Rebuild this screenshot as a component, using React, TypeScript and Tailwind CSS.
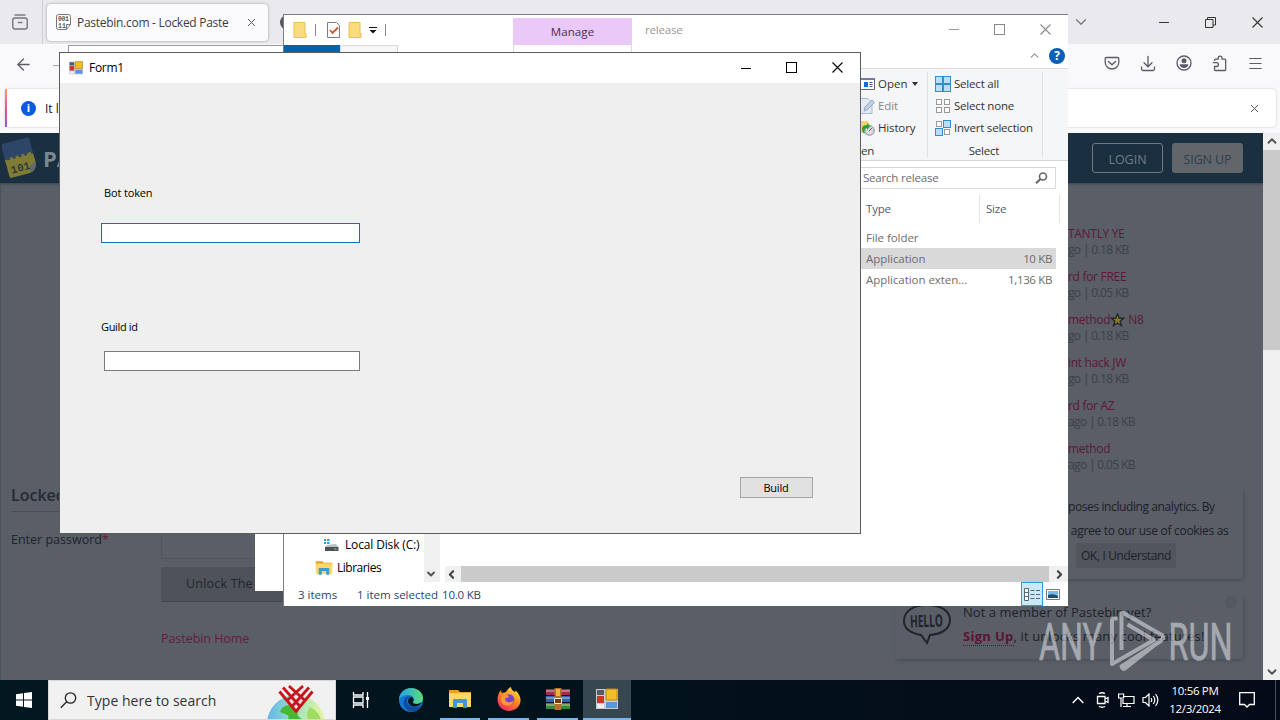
import { ArrowLeft, ChevronDown, ChevronUp, Menu, Search, X } from "lucide-react";

const recentPastes = [
  { title: "TANTLY YE", meta: "go | 0.18 KB" },
  { title: "rd for FREE", meta: "go | 0.05 KB" },
  { title: "method", star: true, suffix: "N8", meta: "go | 0.18 KB" },
  { title: "int hack JW", meta: "go | 0.18 KB" },
  { title: "rd for AZ", meta: "ago | 0.18 KB" },
  { title: "method", meta: "ago | 0.05 KB" },
];

const files = [
  { type: "File folder", size: "", selected: false },
  { type: "Application", size: "10 KB", selected: true },
  { type: "Application exten...", size: "1,136 KB", selected: false },
];

const App = () => {
  return (
    <div className="relative h-[720px] w-[1280px] overflow-hidden bg-black font-['Open_Sans',sans-serif] text-[12px] leading-4 whitespace-nowrap">
      <Browser />
      {/* window behind the explorer */}
      <div className="absolute top-[500px] left-[255px] h-[91px] w-[40px] bg-white" />
      <Explorer />
      <FormWindow />
      <Watermark />
      <Taskbar />
    </div>
  );
};

// ===============================
// BROWSER
// ===============================
function Browser() {
  return (
    <div className="flex h-[680px] flex-col">
      {/* TAB BAR */}
      <div className="flex h-[44px] shrink-0 items-center bg-[#eaeaee]">
        <div className="flex h-full w-[43px] items-center border-r border-[#cfcfd6] pl-[12px]">
          <svg width="16" height="16" viewBox="0 0 16 16" fill="none" stroke="#74747c" strokeWidth="1.4">
            <path d="M2.5 1h11" />
            <rect x=".8" y="4" width="14.4" height="11" rx="2" />
            <path d="M5.8 8.5h4.6" />
          </svg>
        </div>
        <div className="ml-[4px] flex h-[37px] w-[221px] items-center rounded bg-[#fbfbfd] pl-[9px] shadow-[0_0_3px_#9999a4]">
          <svg width="15" height="16" viewBox="0 0 15 16">
            <path d="M.5 2.5Q.5.5 2.5.5h10q2 0 2 2v8l-4 5h-8q-2 0-2-2z M14.5 10.5h-4v5" fill="#fff" stroke="#77777e" />
            <text x="2" y="7" fontSize="6.5" fontFamily="Liberation Mono" fontWeight="bold" fill="#555" textLength="11">001</text>
            <text x="2" y="13.5" fontSize="6.5" fontFamily="Liberation Mono" fontWeight="bold" fill="#555" textLength="8">11</text>
          </svg>
          <span className="ml-[6px] w-[169px] pt-0.5 text-[12px] tracking-[-0.28px] text-[#3b3b44]">Pastebin.com - Locked Paste</span>
          <X size={13} strokeWidth={1.8} className="-ml-px shrink-0 text-[#55555e]" />
        </div>
        <div className="ml-[12px] size-[15px] rounded-full bg-[#55555e]" />
        <div className="ml-auto flex items-center text-[#333]">
          <ChevronDown size={18} strokeWidth={1.6} className="mr-[69px] text-[#777]" />
          <span className="mr-[36px] h-px w-[10px] bg-[#333]" />
          <svg width="11" height="11" viewBox="0 0 11 11" fill="none" stroke="#333" className="mr-[36px]">
            <path d="M.5 2.5h7.5v8H.5z M2.5 2.5v-2h8v7.5h-2.5" />
          </svg>
          <WinClose className="mr-[17px] text-[#333]" />
        </div>
      </div>

      {/* NAV BAR */}
      <div className="flex h-[42px] shrink-0 items-center bg-[#f9f9fb] text-[#5b5b66]">
        <ArrowLeft size={19} strokeWidth={1.6} className="ml-[14px] -mt-0.5" />
        <span className="ml-[20px] h-px w-[15px] bg-[#aaa]" />
        <div className="mb-auto mt-px h-[36px] w-[640px] border border-[#999] bg-white" />
        <div className="mr-[16px] mb-[4px] ml-auto flex items-center gap-[20px]">
          <svg width="16" height="16" viewBox="0 0 16 16" fill="none" stroke="currentColor" strokeWidth="1.3">
            <path d="M2.5 2.5h11q1.3 0 1.3 1.3v3.4a6.8 6.8 0 0 1-13.6 0V3.8q0-1.3 1.3-1.3z" />
            <path d="m4.5 6.5 3.5 3.3 3.5-3.3" strokeLinecap="round" />
          </svg>
          <svg width="16" height="17" viewBox="0 0 16 17" fill="none" stroke="currentColor" strokeWidth="1.3" strokeLinecap="round">
            <path d="M8 1.500v10 M4 7.800l4 4 4-4 M1.500 12v2q0 1.500 1.500 1.500h10q1.500 0 1.500-1.500v-2" />
          </svg>
          <svg width="16" height="16" viewBox="0 0 16 16">
            <circle cx="8" cy="8" r="7" fill="none" stroke="currentColor" strokeWidth="1.3" />
            <circle cx="8" cy="5.8" r="2.5" fill="currentColor" />
            <path d="M3.600 9.300h8.800q-.5 3.700-4.400 3.700t-4.400-3.700z" fill="currentColor" />
          </svg>
          <svg width="15" height="17" viewBox="0 0 15 17" fill="none" stroke="currentColor" strokeWidth="1.3">
            <path d="M2.500 6V5.200q0-1 1-1h2.700V3a1.900 1.900 0 0 1 3.800 0v1.200h2.700q1 0 1 1v9.300q0 1-1 1H3.500q-1 0-1-1v-3H4.500a1.900 1.900 0 0 0 0-3.800H.8" />
          </svg>
          <Menu size={17} strokeWidth={1.6} />
        </div>
      </div>

      {/* NOTIFICATION */}
      <div className="h-[47px] shrink-0 bg-[#f9f9fb] pt-[3px] pr-[4px] pl-[5px]">
        <div className="flex h-[38px] items-center rounded bg-white shadow-[0_0_2px_#bbb]">
          <div className="h-full w-[2px] bg-linear-to-b from-[#ff9a6c] via-[#e5508c] to-[#9059d0]" />
          <div className="ml-[14px] flex size-[15px] items-center justify-center rounded-full bg-[#0a5bdf] text-[11px] font-bold text-white">i</div>
          <span className="ml-[9px] pt-0.5 text-[#15141a]">It lo</span>
          <X size={13} strokeWidth={1.8} className="mr-[15px] ml-auto text-[#555]" />
        </div>
      </div>

      <div className="flex min-h-0 flex-1">
        <PastebinPage />
        <div className="flex w-[17px] flex-col items-center bg-[#f0f0f0]">
          <ChevronUp size={14} strokeWidth={3.2} className="mt-px mb-[2px] shrink-0 text-[#555]" />
          <div className="h-[200px] w-full bg-[#cacaca]" />
          <ChevronDown size={14} strokeWidth={3.2} className="mt-auto mb-px text-[#555]" />
        </div>
      </div>
    </div>
  );
}

function PastebinPage() {
  return (
    <div className="relative flex flex-1 flex-col overflow-hidden bg-[#595e67]">
      <div className="flex h-[50px] shrink-0 items-center bg-[#1a2f40] shadow-[0_1px_2px_#3a434d]">
        <svg width="37" height="42" viewBox="0 0 37 42" className="ml-[2px]">
          <g transform="rotate(-15 18 21)">
            <path d="M3 5q0-2 2-2h25q2 0 2 2v16H3z" fill="#2d4566" />
            <path d="M3 20h29v10q-2 8-9 8H5q-2 0-2-2z" fill="#807b35" />
            <path d="M32 29q-7 0-8 9 7-1 8-9z" fill="#65696a" />
            <path d="M3 21v-2h2v2h3v-3h3v3h3v-3h3v3h3v-3h3v3h3v-3h4v4" fill="#807b35" />
            <text x="6" y="34" fontSize="11" fontWeight="bold" fill="#2e3b3c" fontFamily="Liberation Mono">101</text>
          </g>
        </svg>
        <span className="ml-[4px] text-[22px] font-bold text-[#7c8790]">PASTEBIN</span>
        <div className="mr-[20px] ml-auto flex gap-[9px] text-[12.5px]">
          <div className="flex h-[30px] w-[71px] items-center justify-center rounded-[3px] border border-[#6a7a88] pt-[3px] text-[#6f7c88]">LOGIN</div>
          <div className="flex h-[30px] w-[71px] items-center justify-center rounded-[3px] bg-[#62666b] pt-[3px] tracking-[-0.1px] text-[#2b3f50]">SIGN UP</div>
        </div>
      </div>

      <div className="flex flex-1 justify-between border-l border-[#4b525b]">
        <div className="flex w-[290px] flex-col pt-[303px] pl-[10px] text-[#20242b]">
          <h2 className="h-[26px] border-b border-[#494e57] text-[16px] leading-[18px] font-semibold text-[#262a32]">Locked Paste</h2>
          <div className="mt-[13px] flex">
            <label className="w-[150px] shrink-0 pt-[7px] text-[12.5px]">
              Enter password<span className="text-[#701c33]">*</span>
            </label>
            <div className="flex-1">
              <div className="h-[34px] border border-[#50555e]" />
              <div className="mt-[8px] flex h-[35px] items-center rounded-[2px] border-b border-[#43474f] bg-[#4e535b] pl-[25px] text-[12.5px] tracking-[0.2px]">Unlock The Paste</div>
              <a className="mt-[29px] block text-[12.5px] tracking-[-0.05px] text-[#681c3c]">Pastebin Home</a>
            </div>
          </div>
        </div>
        <div className="flex w-[195px] flex-col gap-[11px] pt-[43px]">
          {recentPastes.map((p, i) => (
            <div key={i} className="flex h-[32px] flex-col text-[12px]">
              <div className="flex items-center tracking-[-0.3px] text-[#601836]">
                {p.title}
                {p.star && (
                  <svg width="15" height="14" viewBox="0 0 16 16" className="mr-[3px]">
                    <path d="m8 1 2 5h5l-4 3.300 1.600 5.200L8 11.500l-4.600 3L5 9.300 1 6h5z" fill="#8a7b20" stroke="#22252a" strokeWidth="1.500" />
                  </svg>
                )}
                {p.suffix}
              </div>
              <div className="tracking-[-0.65px] text-[#3d4149]">{p.meta}</div>
            </div>
          ))}
        </div>
      </div>

      {/* COOKIE NOTICE */}
      <div className="absolute top-[354px] left-[897px] flex h-[92px] w-[346px] flex-col gap-[6px] rounded bg-[#595e67] pt-[11px] pl-[171px] text-[12px] leading-[18px] text-[#1d2128] shadow-[1px_2px_3px_#4b5058]">
        <span className="tracking-[-0.4px]">poses including analytics. By</span>
        <span className="tracking-[-0.3px]">&nbsp;agree to our use of cookies as</span>
        <span className="-mt-[3px] ml-[8px] flex h-[25px] w-[100px] shrink-0 items-center justify-center bg-[#50555e] tracking-[-0.35px]">OK, I Understand</span>
      </div>
      {/* SIGN UP NOTICE */}
      <div className="absolute top-[462px] left-[895px] flex h-[64px] w-[348px] rounded bg-[#595e67] pt-[8px] pl-[7px] text-[13px] text-[#1e2229] shadow-[1px_2px_3px_#4b5058]">
        <svg width="50" height="45" viewBox="0 0 50 45" fill="none" stroke="#20242b" strokeWidth="2" className="shrink-0">
          <path d="M25 2C10 2 2 9 2 18c0 7 6 12 17 14l6 8 3-8c13-1 20-7 20-15C48 8 39 2 25 2z" />
          <text x="8" y="24" fontSize="17" fontWeight="bold" fontFamily="Open Sans" textLength="33" lengthAdjust="spacingAndGlyphs" stroke="none" fill="#20242b" transform="rotate(-2 25 20)">HELLO</text>
        </svg>
        <div className="ml-[11px] flex flex-col gap-[6px] leading-[18px]">
          <span className="tracking-[0.05px]">Not a member of Pastebin yet?</span>
          <span className="tracking-[0.12px]">
            <b className="border-b border-dotted border-[#5b1432] tracking-[0.3px] text-[#5b1432]">Sign Up</b>, it unlocks many cool features!
          </span>
        </div>
        <div className="absolute top-px right-[6px] flex size-[12px] items-center justify-center rounded-full bg-[#525760]">
          <X size={8} className="text-[#5e626a]" />
        </div>
      </div>
    </div>
  );
}

// ===============================
// EXPLORER
// ===============================
function Explorer() {
  return (
    <div className="absolute top-[14px] left-[283px] flex h-[592px] w-[785px] flex-col border-t border-l border-[#7d7d85] bg-white">
      {/* TITLE */}
      <div className="flex h-[30px] shrink-0 items-start">
        <div className="flex h-[30px] w-[229px] items-center pl-[9px]">
          <Folder />
          <span className="ml-[8px] h-[12px] w-px bg-[#888]" />
          <svg width="13" height="16" viewBox="0 0 13 16" className="ml-[11px]">
            <path d="M.5.5h9l3 3v12H.5z" fill="#fff" stroke="#7c7c90" />
            <path d="m3 8 2.500 3L11 5.500" fill="none" stroke="#d9502b" strokeWidth="1.800" />
          </svg>
          <span className="ml-[8px]"><Folder /></span>
          <svg width="8" height="7" viewBox="0 0 8 7" className="ml-[7px]">
            <path d="M0 .5h8" stroke="#111" />
            <path d="M.5 3h7L4 6.500z" fill="#111" />
          </svg>
          <span className="ml-[8px] h-[12px] w-px bg-[#888]" />
        </div>
        <div className="mt-[3px] flex h-[27px] w-[119px] items-center justify-center bg-[#eac9f9] pt-px text-[11.500px] tracking-[0.100px] text-[#46304f]">Manage</div>
        <span className="mt-[7px] ml-[13px] text-[11.500px] tracking-[-0.200px] text-[#999]">release</span>
        <div className="mt-[9px] mr-[17px] ml-auto flex items-center gap-[35px] text-[#888]">
          <span className="h-px w-[10px] bg-[#999]" />
          <span className="size-[11px] border border-[#888]" />
          <WinClose className="text-[#888]" />
        </div>
      </div>
      {/* TABS */}
      <div className="flex h-[24px] shrink-0 border-b border-[#dadbdc]">
        <div className="w-[56px] bg-[#0063b1]" />
        <div className="w-[58px] border border-b-0 border-[#dadbdc] bg-[#f5f6f7]" />
        <div className="ml-[115px] w-[119px] border-x border-[#dadbdc]" />
        <div className="mr-[3px] mb-[2px] ml-auto flex items-center gap-[8px]">
          <ChevronUp size={13} strokeWidth={2.4} className="text-[#999]" />
          <span className="flex size-[16px] items-center justify-center rounded-full bg-[#0a5fb8] text-[12px] font-bold text-white">?</span>
        </div>
      </div>
      {/* RIBBON */}
      <div className="flex h-[92px] shrink-0 border-b border-[#d5d7d9] bg-[#f5f6f7] pl-[577px] text-[11.500px] text-[#333]">
        <div className="my-[3px] flex w-[67px] flex-col border-r border-[#e0e1e2] pt-px">
          <div className="flex h-[22px] shrink-0 items-center">
            <svg width="14" height="12" viewBox="0 0 14 12">
              <path d="M0 .5h13.500v11H0" fill="#fff" stroke="#667" />
              <path d="M0 1h13" stroke="#77a" strokeWidth="2" />
              <path d="M3 4h4v5H3z" fill="#0a72d0" />
              <path d="M8.500 4.500h3m-3 2h3m-3 2h3" stroke="#557" />
            </svg>
            <span className="ml-[3px]">Open</span>
            <svg width="6" height="4" viewBox="0 0 6 4" className="ml-[4px]"><path d="M0 0h6L3 4z" fill="#333" /></svg>
          </div>
          <div className="flex h-[22px] shrink-0 items-center text-[#888]">
            <svg width="14" height="16" viewBox="0 0 14 16">
              <path d="M0 .5h7l4 4v11H0" fill="#e4ebf5" stroke="#a9b7cf" />
              <path d="m3 13 1-4 7-7 2.500 2.500-7 7z" fill="#c4d0e4" stroke="#98a8c4" />
            </svg>
            <span className="ml-[3px] tracking-[-0.100px]">Edit</span>
          </div>
          <div className="flex h-[22px] shrink-0 items-center">
            <svg width="14" height="16" viewBox="0 0 14 16">
              <path d="M0 1h6l3 3v9H0z" fill="#f8d463" />
              <circle cx="8.500" cy="10.500" r="4.700" fill="#d8dce2" stroke="#7c858e" />
              <path d="M1 9q0-4 5-4v-2l3 3.500L6 10V8Q2.500 8 3.500 14 1 12 1 9z" fill="#21a340" />
              <path d="m8 11 3-3" stroke="#c33" />
            </svg>
            <span className="ml-[3px] tracking-[-0.150px]">History</span>
          </div>
          <span className="mt-[5px] leading-[13px] tracking-[-0.100px]">en</span>
        </div>
        <div className="my-[3px] flex w-[115px] flex-col border-r border-[#e0e1e2] pt-px pl-[7px]">
          <div className="flex h-[22px] shrink-0 items-center gap-[3px] tracking-[-0.200px]">
            <SelectIcon on={[true, true, true, true]} />Select all
          </div>
          <div className="flex h-[22px] shrink-0 items-center gap-[3px] tracking-[-0.200px]">
            <SelectIcon on={[false, false, false, false]} />Select none
          </div>
          <div className="flex h-[22px] shrink-0 items-center gap-[3px] tracking-[-0.200px]">
            <SelectIcon on={[false, true, true, false]} />Invert selection
          </div>
          <span className="mt-[5px] pr-[9px] text-center leading-[13px] tracking-[-0.200px]">Select</span>
        </div>
      </div>
      {/* SEARCH */}
      <div className="flex h-[34px] shrink-0 items-center justify-end pr-[12px]">
        <div className="flex h-[22px] w-[220px] items-center justify-between border border-[#d9d9d9] pr-[7px] pl-[26px] text-[11.500px] tracking-[-0.200px] text-[#6d6d6d]">
          Search release
          <svg width="13" height="12" viewBox="0 0 13 12" fill="none" stroke="#666">
            <circle cx="8" cy="4.500" r="3.500" strokeWidth="1.600" />
            <path d="M5.500 7 1 11.300" strokeWidth="2" />
          </svg>
        </div>
      </div>

      {/* FILE LIST */}
      <div className="flex min-h-0 flex-1">
        <div className="mt-auto flex h-[49px] w-[156px] bg-white">
          <div className="flex flex-1 flex-col">
            <div className="flex h-[23px] items-center pl-[39px] text-black">
              <svg width="16" height="14" viewBox="0 0 16 14" className="mr-[6px]">
                <path d="M1 1h2v2H1zm3 0h2.500v2H4zM1 4h2v2H1zm3 0h2.500v2H4z" fill="#19a7dd" />
                <path d="m4 7 9-1 2.500 3H2z" fill="#b9bec2" />
                <path d="M2 9h13.500v4H2z" fill="#4a5358" />
                <path d="M11.500 11h2" stroke="#8fe39a" />
              </svg>
              <span className="tracking-[-0.150px]">Local Disk (C:)</span>
            </div>
            <div className="flex h-[24px] items-center pl-[31px] text-black">
              <FolderLibrary size={18} />
              <span className="ml-[4px] tracking-[-0.500px]">Libraries</span>
            </div>
          </div>
          <div className="flex w-[16px] items-end justify-center bg-[#f0f0f0] pb-[2px]">
            <ChevronDown size={12} strokeWidth={4} className="-ml-0.5 text-[#555]" />
          </div>
        </div>
        <div className="flex flex-1 flex-col">
          <div className="flex h-[28px] justify-end pr-[8px] text-[11.500px] text-[#4c607a]">
            <div className="flex w-[118px] items-center border-r border-[#e5e5e5] pl-[4px] tracking-[-0.200px]">Type</div>
            <div className="flex w-[80px] items-center border-r border-[#e5e5e5] pl-[6px] tracking-[-0.200px]">Size</div>
          </div>
          <div className="mt-[4px] mr-[12px] flex flex-col text-[11.500px] text-[#6d6d6d]">
            {files.map((f) => (
              <div key={f.type} className={`flex h-[21px] items-center justify-end pt-px pr-[4px] ${f.selected ? "bg-[#d9d9d9]" : ""}`}>
                <span className="w-[106px] tracking-[-0.050px]">{f.type}</span>
                <span className="w-[80px] text-right tracking-[-0.350px]">{f.size}</span>
              </div>
            ))}
          </div>
          <div className="mt-auto ml-[5px] flex h-[16px] items-center justify-between bg-[#f0f0f0]">
            <ChevronDown size={13} strokeWidth={4} className="rotate-90 text-[#444]" />
            <div className="mr-[4px] ml-[3px] h-full flex-1 bg-[#cacaca]" />
            <ChevronDown size={13} strokeWidth={4} className="mr-[2px] -rotate-90 text-[#444]" />
          </div>
        </div>
      </div>

      {/* STATUS */}
      <div className="flex h-[24px] shrink-0 items-center pr-[7px] pl-[14px] text-[11.500px] text-[#29466f]">
        <span className="w-[59px] pt-0.5">3 items</span>
        <span className="w-[85px] pt-0.5">1 item selected</span>
        <span className="pt-0.5 tracking-[-0.200px]">10.0 KB</span>
        <div className="ml-auto flex h-[24px] w-[22px] items-center justify-center border border-[#26a0da] bg-[#cbe8f6]">
          <svg width="17" height="13" viewBox="0 0 17 13" fill="none" stroke="#52697c">
            <path d="M.5.5h4v12h-4zM.5 4.500h4M.5 8.500h4" fill="#fff" />
            <path d="M6.500 2.500h4m1.500 0h4M6.500 6.500h4m1.500 0h4M6.500 10.500h4m1.500 0h4" />
          </svg>
        </div>
        <svg width="14" height="11" viewBox="0 0 14 11" className="mr-px ml-[3px]">
          <path d="M.5.5h13v10H.5z" fill="#fff" stroke="#778" />
          <path d="M2 2h10v7H2z" fill="#77b9ee" />
          <path d="M2 6q5-2 10 1v2H2z" fill="#224e63" />
        </svg>
      </div>
    </div>
  );
}

// ===============================
// FORM1
// ===============================
function FormWindow() {
  return (
    <div className="absolute top-[52px] left-[59px] flex h-[482px] w-[802px] flex-col border border-[#5c5c5c] bg-[#efefef] text-black">
      <div className="flex h-[30px] shrink-0 items-center bg-white pl-[9px]">
        <FormIcon size={14} />
        <span className="ml-[6px] tracking-[-0.300px]">Form1</span>
        <div className="mr-[17px] ml-auto flex items-center gap-[35px]">
          <span className="h-px w-[10px] bg-black" />
          <span className="mb-0.5 size-[11px] border border-black" />
          <WinClose className="mb-0.5 text-black" />
        </div>
      </div>
      <div className="flex flex-1 flex-col items-start pl-[41px] text-[11px]">
        <label className="mt-[102px] ml-[3px] tracking-[-0.150px]">Bot token</label>
        <div className="mt-[22px] h-[20px] w-[259px] border border-[#0078b7] bg-white" />
        <label className="mt-[76px] tracking-[-0.350px]">Guild id</label>
        <div className="mt-[16px] ml-[3px] h-[20px] w-[256px] border border-[#7a7a7a] bg-white" />
        <div className="mt-[106px] mr-[47px] flex h-[21px] w-[73px] items-center justify-center self-end border border-[#a5a5a5] bg-[#e1e1e1] pr-px tracking-[-0.200px]">Build</div>
      </div>
    </div>
  );
}

function Watermark() {
  return (
    <svg width="196" height="66" viewBox="0 0 196 66" className="absolute top-[607px] left-[1037px] opacity-55" fill="#e4e6ea" stroke="#e4e6ea" strokeWidth=".6" fontFamily="Roboto" fontSize="51.500">
      <text x="2" y="52.500" textLength="63" lengthAdjust="spacingAndGlyphs">ANY</text>
      <text x="131.500" y="52.500" textLength="64" lengthAdjust="spacingAndGlyphs">RUN</text>
      <g fill="none" strokeWidth="4" strokeLinejoin="round">
        <path d="M80.500 11.500H77q-2 0-2 2.500v43l42-24-26.500-15.500" />
        <path d="M84.500 43V7q0-2 2-1l40 23" />
        <path d="M126 28.500v3L88 61.500q-2 1.500-3.500-2l40-26" />
      </g>
    </svg>
  );
}

// ===============================
// TASKBAR
// ===============================
function Taskbar() {
  return (
    <div className="flex h-[40px] items-center bg-linear-to-r from-[#02171f] via-[#02121b] to-[#050a18] text-white">
      <div className="flex w-[48px] shrink-0 justify-center">
        <svg width="16" height="16" viewBox="0 0 16 16" fill="#fff">
          <path d="M0 2.200 7 1.200v6.300H0zM8 1l8-1v7.500H8zM0 8.500h7v6.300l-7-1zM8 8.500h8V16l-8-1z" />
        </svg>
      </div>
      <div className="flex h-full w-[288px] items-center border border-[#d8d8d8] bg-[#f1f1f1] pl-[11px] text-[#333]">
        <svg width="17" height="17" viewBox="0 0 17 17" fill="none" stroke="#222" strokeWidth="1.300">
          <circle cx="10.500" cy="6" r="5.200" />
          <path d="M6.700 9.800.8 15.800" />
        </svg>
        <span className="ml-[10px] pt-0.5 text-[14px] tracking-[0.030px]">Type here to search</span>
        <svg width="60" height="38" viewBox="0 0 60 38" className="mr-[9px] ml-auto">
          <defs>
            <linearGradient id="globe" x1="0" x2="1">
              <stop offset="0" stopColor="#62b3f0" />
              <stop offset=".5" stopColor="#9fe3c0" />
              <stop offset="1" stopColor="#e9f6a0" />
            </linearGradient>
          </defs>
          <circle cx="30" cy="43" r="29" fill="url(#globe)" />
          <path d="M14 31q3-9 13-6 9 1 5 6-2 4 4 7H22q2-4-3-5z" fill="#46b834" />
          <path d="M44 26q7 3 11 12H42q-3-6 2-12z" fill="#9fdd62" />
          <path d="m20 18 10-5 10 5-10 14z" fill="#f7e3df" />
          <g stroke="#c9141e" strokeWidth="2.800" fill="none">
            <path d="m13.500 10.500 17 20.500M17 6.500 34.500 26M23 5l16.500 15" />
            <path d="m46.500 10.500-17 20.500M43 6.500 25.500 26M37 5 20.500 20" />
          </g>
        </svg>
      </div>

      <div className="flex h-full items-center">
        <div className="flex w-[48px] justify-center">
          <svg width="17" height="16" viewBox="0 0 17 16" fill="none" stroke="#fff" strokeWidth="1.300">
            <path d="M1.500 0v3h9.500V0M1.500 16v-3h9.500v3M1.500 5h9.500v6H1.500zM15.500 0v16" />
            <path d="M14 5h3v3h-3z" fill="#fff" stroke="none" />
          </svg>
        </div>
        <div className="flex w-[52px] justify-center pl-0.5">
          <EdgeIcon />
        </div>
        <div className="flex h-full w-[48px] justify-center px-[4px]">
          <div className="flex w-full items-center justify-center border-b-2 border-[#76b9ed]"><FolderLibrary size={24} /></div>
        </div>
        <div className="flex h-full w-[49px] px-[4px]">
          <div className="flex w-full items-center justify-center border-b-2 border-[#76b9ed]"><FirefoxIcon /></div>
        </div>
        <div className="flex h-full w-[49px] px-[4px]">
          <div className="flex w-full items-center justify-center border-b-2 border-[#76b9ed]"><RarIcon /></div>
        </div>
        <div className="ml-px flex h-full w-[48px] items-center justify-center border-b-2 border-[#76b9ed] bg-[#37474f]">
          <FormIcon size={22} />
        </div>
      </div>

      <div className="ml-auto flex h-full items-center">
        <svg width="12" height="8" viewBox="0 0 12 8" fill="none" stroke="#fff" strokeWidth="1.400"><path d="m.7 7 5.300-5.500L11.300 7" /></svg>
        <svg width="14" height="16" viewBox="0 0 14 16" fill="none" stroke="#fff" strokeWidth="1.300" className="ml-[12px]">
          <path d="M1.500 4.500h7.500v7H1.500zM9 7l3-1.500v5L9 9M3 1.500q3-1.500 6 0M3 14.500q3 1.500 6 0" />
        </svg>
        <svg width="17" height="15" viewBox="0 0 17 15" fill="none" stroke="#fff" strokeWidth="1.200" className="ml-[8px]">
          <path d="M6 3.500h10v7H5V6M5 13.500h8M9 10.500v3M.6 1h5v4h-5zM3 5v9" />
        </svg>
        <svg width="17" height="14" viewBox="0 0 17 14" fill="none" stroke="#fff" strokeWidth="1.200" className="ml-[7px]">
          <path d="M1 4.500h2.500L7 1v12L3.500 9.500H1zM9 5q1.500 2 0 4M11.300 3q3 4 0 8M13.600 1.200q4.500 5.800 0 11.600" />
        </svg>
        <div className="ml-[9px] flex w-[54px] flex-col items-center gap-[2px] text-[11.500px] tracking-[-0.350px]">
          <span>10:56 PM</span>
          <span>12/3/2024</span>
        </div>
        <svg width="16" height="16" viewBox="0 0 16 16" fill="none" stroke="#fff" strokeWidth="1.300" className="ml-[17px]">
          <path d="M.7.700h14.600v11.800H10.500L8 15l-2.500-2.500H.7z" />
        </svg>
        <span className="mr-[4px] ml-[20px] h-full w-px bg-[#46505a]" />
      </div>
    </div>
  );
}

// ===============================
// ICONS
// ===============================
function WinClose({ className }: { className?: string }) {
  return (
    <svg width="11" height="11" viewBox="0 0 11 11" fill="none" stroke="currentColor" strokeWidth="1.100" className={className}>
      <path d="m.5.500 10 10m0-10-10 10" />
    </svg>
  );
}

function Folder() {
  return (
    <svg width="14" height="16" viewBox="0 0 14 16">
      <path d="M1 .5h11v11h1v4H1z" fill="#fbdc7c" stroke="#e8bf55" />
    </svg>
  );
}

function FolderLibrary({ size }: { size: number }) {
  return (
    <svg width={size} height={size} viewBox="0 0 24 24">
      <path d="M1 3h9l2 2h11v5H1z" fill="#e4a12b" />
      <path d="M1 6h22v14H1z" fill="#fcd867" />
      <path d="M5 21v-8q0-1 1-1h12q1 0 1 1v8h-4v-5H9v5z" fill="#3f97d4" />
    </svg>
  );
}

function SelectIcon({ on }: { on: boolean[] }) {
  return (
    <svg width="16" height="16" viewBox="0 0 16 16">
      {on.map((v, i) => {
        const x = i % 2 ? 8.5 : 0.5;
        const y = i > 1 ? 8.5 : 0.5;
        return v ? (
          <rect key={i} x={x} y={y} width="7" height="7" fill="#b9defa" stroke="#2d8fd5" />
        ) : (
          <rect key={i} x={x + 1} y={y + 1} width="5" height="5" fill="#fff" stroke="#9a9a9a" />
        );
      })}
    </svg>
  );
}

function FormIcon({ size }: { size: number }) {
  return (
    <svg width={size} height={size} viewBox="0 0 22 22">
      <path d="M0 1h22v20H0z" fill="#c8ccd4" />
      <path d="M1 2h7v5H1z" fill="#555c66" />
      <path d="M1 8h7v7H1z" fill="#d3312c" />
      <path d="M10 1h11v11H10z" fill="#f2bd26" stroke="#b98512" />
      <path d="M1 16h7v4H1z" fill="#eee" />
      <path d="M10 14h11v6H10z" fill="#5a95ea" />
    </svg>
  );
}

function EdgeIcon() {
  return (
    <svg width="24" height="24" viewBox="0 0 24 24">
      <defs>
        <linearGradient id="edgeTop" x1="0" x2="1">
          <stop offset="0" stopColor="#1fa3e6" />
          <stop offset="1" stopColor="#5fdc78" />
        </linearGradient>
      </defs>
      <circle cx="12" cy="12" r="12" fill="#1377cf" />
      <path d="M0 12C0 5 5.500 0 12 0s12 4.500 12 10c0 4-3 6-6.500 6-2.500 0-4-1-3.500-2 2-3 0-7-4.500-7C5 7 1 9 0 12z" fill="url(#edgeTop)" />
      <path d="M8 13c0-3 2-4.500 3.500-4.500-4-1-8 3-6.500 8.500 1 4 5 7 9 6.700 4-.5 7-3 8.500-6.200-6 3.500-14.500 1.500-14.500-4.500z" fill="#0d4f9e" />
      <path d="M12 9c2 0 3.500 2 2 5-.5 1 1 2 3.500 2 2 0 4-.8 5-2 0 2-2 4-5.500 4.500C12 19 9 16 9 13q0-3 3-4z" fill="#02171f" />
    </svg>
  );
}

function FirefoxIcon() {
  return (
    <svg width="24" height="24" viewBox="0 0 24 24">
      <defs>
        <linearGradient id="fox" x1=".8" y1="0" x2=".2" y2="1">
          <stop offset="0" stopColor="#ffe94a" />
          <stop offset=".45" stopColor="#ff8a1f" />
          <stop offset="1" stopColor="#f0246b" />
        </linearGradient>
      </defs>
      <path d="M4 3q0 2 1 3l4-1q2-4 5-5 0 3 4 5 1-1 0-2 5 4 5.500 9.500C24 19 18.500 24 12 24S.5 19 .5 12.500Q.5 7 4 3z" fill="url(#fox)" />
      <circle cx="12" cy="12.500" r="5.300" fill="#7a3fd6" />
      <path d="M5 8q4-2 7 1.500-1 1.500-4 1.500 0 4 4 4.500 3 0 4.500-2-1 5-6 5-6 0-6.500-6z" fill="#ff9a2a" />
    </svg>
  );
}

function RarIcon() {
  return (
    <svg width="24" height="22" viewBox="0 0 24 22">
      <path d="M0 1h24v6H0z" fill="#a52a55" />
      <path d="M0 8h24v6H0z" fill="#3262b5" />
      <path d="M0 15h24v6H0z" fill="#2c8c3c" />
      <path d="M0 3h24M0 10h24M0 17h24" stroke="#d8c690" />
      <path d="M8.500 0h7v22h-7z" fill="#b5702c" />
      <path d="M10 1h4v7h-4z" fill="#efb43a" />
      <path d="M8.500 10.500h7v5h-7z" fill="#6b3a16" stroke="#f3e9d0" />
    </svg>
  );
}

export default App;
